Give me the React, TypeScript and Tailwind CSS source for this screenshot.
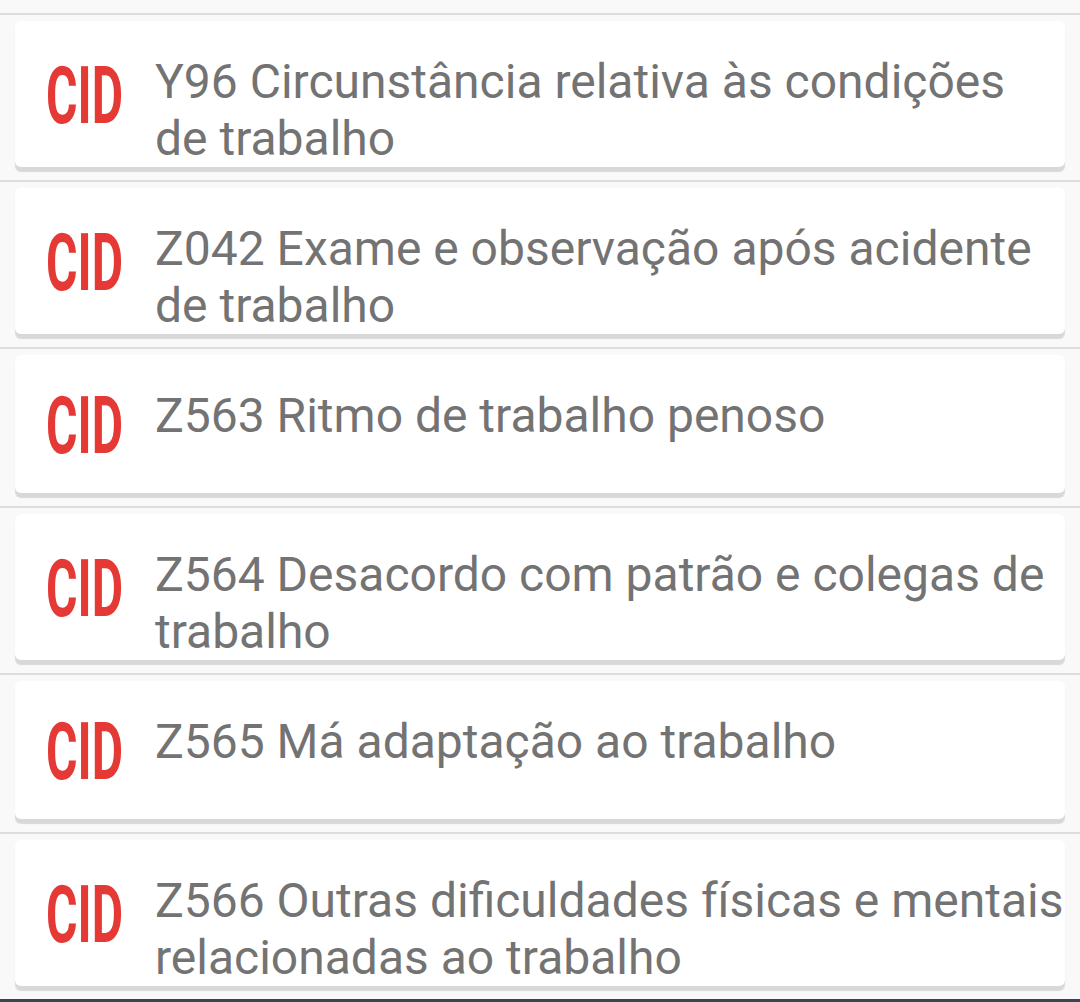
const items = [
  { code: "Y96", lines: ["Y96 Circunstância relativa às condições", "de trabalho"] },
  { code: "Z042", lines: ["Z042 Exame e observação após acidente", "de trabalho"] },
  { code: "Z563", lines: ["Z563 Ritmo de trabalho penoso"] },
  { code: "Z564", lines: ["Z564 Desacordo com patrão e colegas de", "trabalho"] },
  { code: "Z565", lines: ["Z565 Má adaptação ao trabalho"] },
  { code: "Z566", lines: ["Z566 Outras dificuldades físicas e mentais", "relacionadas ao trabalho"] },
];

function Divider() {
  return <div className="h-[2px] bg-[#dddddd]" />;
}

function CidCard({ lines }: { lines: string[] }) {
  return (
    <div className="mx-[15px] mt-[6px] mb-[13px] flex min-h-[138px] rounded-[6px] bg-white shadow-[0_5px_1px_rgba(0,0,0,0.13)]">
      <div className="flex w-[140px] shrink-0 items-center pt-[4px]">
        <span className="origin-left translate-x-[31px] scale-x-[0.61] font-['Roboto'] text-[79px] font-bold leading-none text-[#e53935]">
          CID
        </span>
      </div>
      <div className="flex-1 pt-[32px] font-['Roboto'] text-[48px] leading-[57px] text-[#737373]">
        {lines.map((l) => (
          <div key={l} className="whitespace-nowrap">
            {l}
          </div>
        ))}
      </div>
    </div>
  );
}

export default function App() {
  return (
    <div className="flex h-[1002px] flex-col overflow-hidden bg-[#f9f9f9] font-['Roboto',sans-serif]">
      <div className="mx-[15px] mb-[13px] h-[1px] rounded-b-[6px] bg-white shadow-[0_5px_1px_rgba(0,0,0,0.13)]" />
      {items.map((it) => (
        <div key={it.code}>
          <Divider />
          <CidCard lines={it.lines} />
        </div>
      ))}
      <div className="flex-1" />
      <div className="h-[4px] shrink-0 bg-[#37474f]" />
    </div>
  );
}
